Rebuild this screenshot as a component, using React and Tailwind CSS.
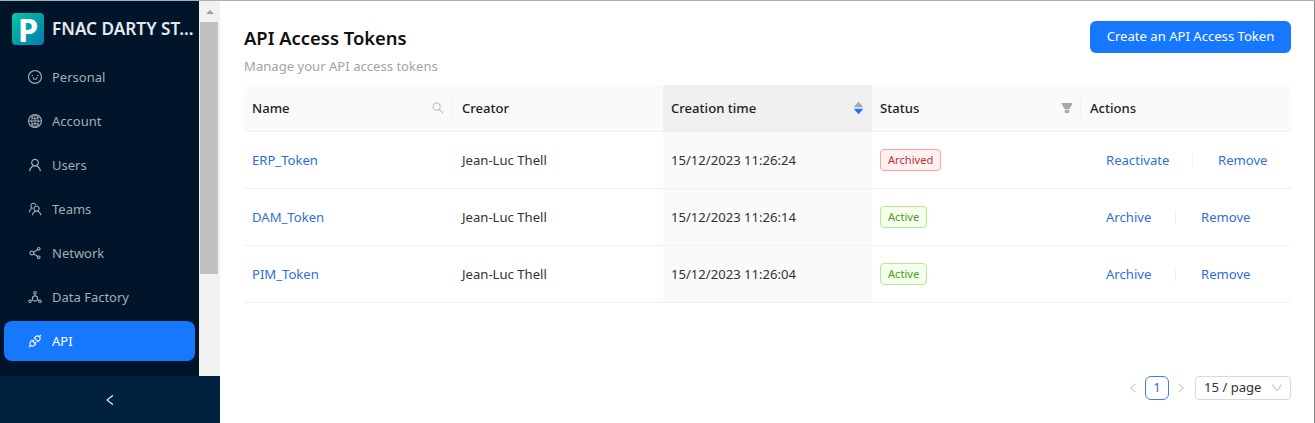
import React from "react";
import {
  AiOutlineSmile, AiOutlineGlobal, AiOutlineUser, AiOutlineTeam, AiOutlineShareAlt,
  AiOutlineDeploymentUnit, AiOutlineApi, AiOutlineLeft, AiOutlineRight, AiOutlineDown,
  AiOutlineSearch, AiFillFilter, AiFillCaretUp, AiFillCaretDown,
} from "react-icons/ai";

const menu = [
  ["Personal", AiOutlineSmile],
  ["Account", AiOutlineGlobal],
  ["Users", AiOutlineUser],
  ["Teams", AiOutlineTeam],
  ["Network", AiOutlineShareAlt],
  ["Data Factory", AiOutlineDeploymentUnit],
  ["API", AiOutlineApi],
];

const rows = [
  { name: "ERP_Token", time: "15/12/2023 11:26:24", status: "Archived", action: "Reactivate", gap: "w-[112px]" },
  { name: "DAM_Token", time: "15/12/2023 11:26:14", status: "Active", action: "Archive", gap: "w-[95px]" },
  { name: "PIM_Token", time: "15/12/2023 11:26:04", status: "Active", action: "Archive", gap: "w-[95px]" },
];

const grid = "grid grid-cols-[209px_210px_209px_209px_210px]";

function Logo() {
  return (
    <div className="w-8 h-8 rounded-[4px] bg-gradient-to-br from-[#12c79a] to-[#0b78b0] flex items-center justify-center shrink-0">
      <span className="text-white font-bold text-[33px] leading-none">P</span>
    </div>
  );
}

export default function App() {
  return (
    <div className="h-[423px] w-[1315px] overflow-hidden flex flex-col bg-white text-[13.1px] font-['Noto_Sans','Open_Sans',sans-serif]">
      <div className="h-px bg-[#9fb2b5] shrink-0" />
      <div className="flex flex-1 min-h-0">
        <aside className="w-[220px] shrink-0 flex flex-col bg-[#002140]">
          <div className="h-[375px] flex">
            <nav className="w-[199px] bg-[#001529] flex flex-col">
              <div className="h-[44px] pt-3 pl-3 flex items-start gap-2">
                <Logo />
                <span className="text-[#e4e9f0] text-[17.2px] leading-8 font-semibold whitespace-nowrap">FNAC DARTY ST...</span>
              </div>
              <ul className="flex flex-col gap-1 mt-3 px-1">
                {menu.map(([label, Icon]) => {
                  const active = label === "API";
                  return (
                    <li
                      key={label}
                      className={`h-10 rounded-lg flex items-center pl-[23px] gap-[9px] ${active ? "bg-[#1677ff] text-white" : "text-[#a5acb4]"}`}
                    >
                      <Icon className="w-4 h-4 shrink-0" />
                      <span className="text-[13px] pt-[2px]">{label}</span>
                    </li>
                  );
                })}
              </ul>
            </nav>
            <div className="w-[21px] bg-[#f1f1f1] flex flex-col items-center">
              <div className="h-[21px] flex items-center justify-center">
                <div className="w-0 h-0 border-l-[4px] border-r-[4px] border-b-[4px] border-l-transparent border-r-transparent border-b-[#a3a3a3]" />
              </div>
              <div className="w-[18px] h-[252px] bg-[#c1c1c1] mr-[2px]" />
            </div>
          </div>
          <div className="flex-1 flex items-center justify-center text-white">
            <AiOutlineLeft className="w-[14px] h-[14px]" />
          </div>
        </aside>

        <main className="flex-1 min-w-0 pl-6 flex flex-col border-r border-[#8a8a8a]">
          <div className="flex justify-between items-start pt-5 h-[84px] w-[1047px]">
            <div>
              <h1 className="text-[18.4px] leading-[34px] font-semibold text-[#111]">API Access Tokens</h1>
              <p className="leading-5 mt-[1px] text-[#a3a3a3]">Manage your API access tokens</p>
            </div>
            <button className="h-8 w-[201px] rounded-md bg-[#1677ff] text-white">Create an API Access Token</button>
          </div>

          <div className="w-[1047px]">
            <div className={`${grid} h-[47px] bg-[#fafafa] border-b border-[#f0f0f0] font-medium text-[#222] rounded-t-lg`}>
              <div className="flex items-center justify-between pl-2 pr-2 relative">
                <span className="pt-[2px]">Name</span>
                <AiOutlineSearch className="w-[14px] h-[14px] text-[#bdbdbd]" />
                <div className="absolute right-0 top-[14px] w-px h-[19px] bg-[#f0f0f0]" />
              </div>
              <div className="flex items-center pl-2 ml-px"><span className="pt-[2px]">Creator</span></div>
              <div className="flex items-center justify-between pl-2 pr-[7px] bg-[#f0f0f0]">
                <span className="pt-[2px]">Creation time</span>
                <span className="flex flex-col items-center -space-y-[6px]">
                  <AiFillCaretUp className="w-[13px] h-[13px] text-[#a8a8a8]" />
                  <AiFillCaretDown className="w-[13px] h-[13px] text-[#1677ff]" />
                </span>
              </div>
              <div className="flex items-center justify-between pl-2 pr-[7px] relative">
                <span className="pt-[2px]">Status</span>
                <AiFillFilter className="w-[14px] h-[14px] text-[#a8a8a8]" />
                <div className="absolute right-0 top-[14px] w-px h-[19px] bg-[#f0f0f0]" />
              </div>
              <div className="flex items-center pl-[9px]"><span className="pt-[2px]">Actions</span></div>
            </div>
            {rows.map((r) => (
              <div key={r.name} className={`${grid} h-[57px] border-b border-[#f0f0f0] text-[#333]`}>
                <div className="flex items-center pl-2 pt-[2px] text-[#2f6fd6]">{r.name}</div>
                <div className="flex items-center pl-2 pt-[2px] ml-px">Jean-Luc Thell</div>
                <div className="flex items-center pl-2 pt-[2px] bg-[#fafafa]">{r.time}</div>
                <div className="flex items-center pl-2">
                  <span
                    className={`h-[22px] px-[7px] flex items-center rounded border text-[11.1px] ${
                      r.status === "Archived"
                        ? "bg-[#fff1f0] border-[#ffa39e] text-[#b8323c]"
                        : "bg-[#f6ffed] border-[#b7eb8f] text-[#4a9e1c]"
                    }`}
                  >
                    {r.status}
                  </span>
                </div>
                <div className="flex items-center pl-[25px] pt-[2px] text-[#2f6fd6]">
                  <span className={`${r.gap} shrink-0 relative`}>
                    {r.action}
                    <span className="absolute right-[25px] top-[3px] w-px h-[13px] bg-[#f0f0f0]" />
                  </span>
                  <span>Remove</span>
                </div>
              </div>
            ))}
          </div>

          <div className="flex justify-end items-center gap-[6px] mt-[73px] w-[1047px]">
            <AiOutlineLeft className="w-3 h-3 text-[#c8c8c8]" />
            <div className="w-6 h-6 rounded-md border border-[#3b82d6] text-[#2f6fd6] flex items-center justify-center">1</div>
            <AiOutlineRight className="w-3 h-3 text-[#c8c8c8]" />
            <div className="w-24 h-6 ml-[2px] rounded border border-[#d9d9d9] flex items-center justify-between pl-2 pr-[6px] text-[#333]">
              <span>15 / page</span>
              <AiOutlineDown className="w-[14px] h-[14px] text-[#c8c8c8]" />
            </div>
          </div>
        </main>
      </div>
    </div>
  );
}
